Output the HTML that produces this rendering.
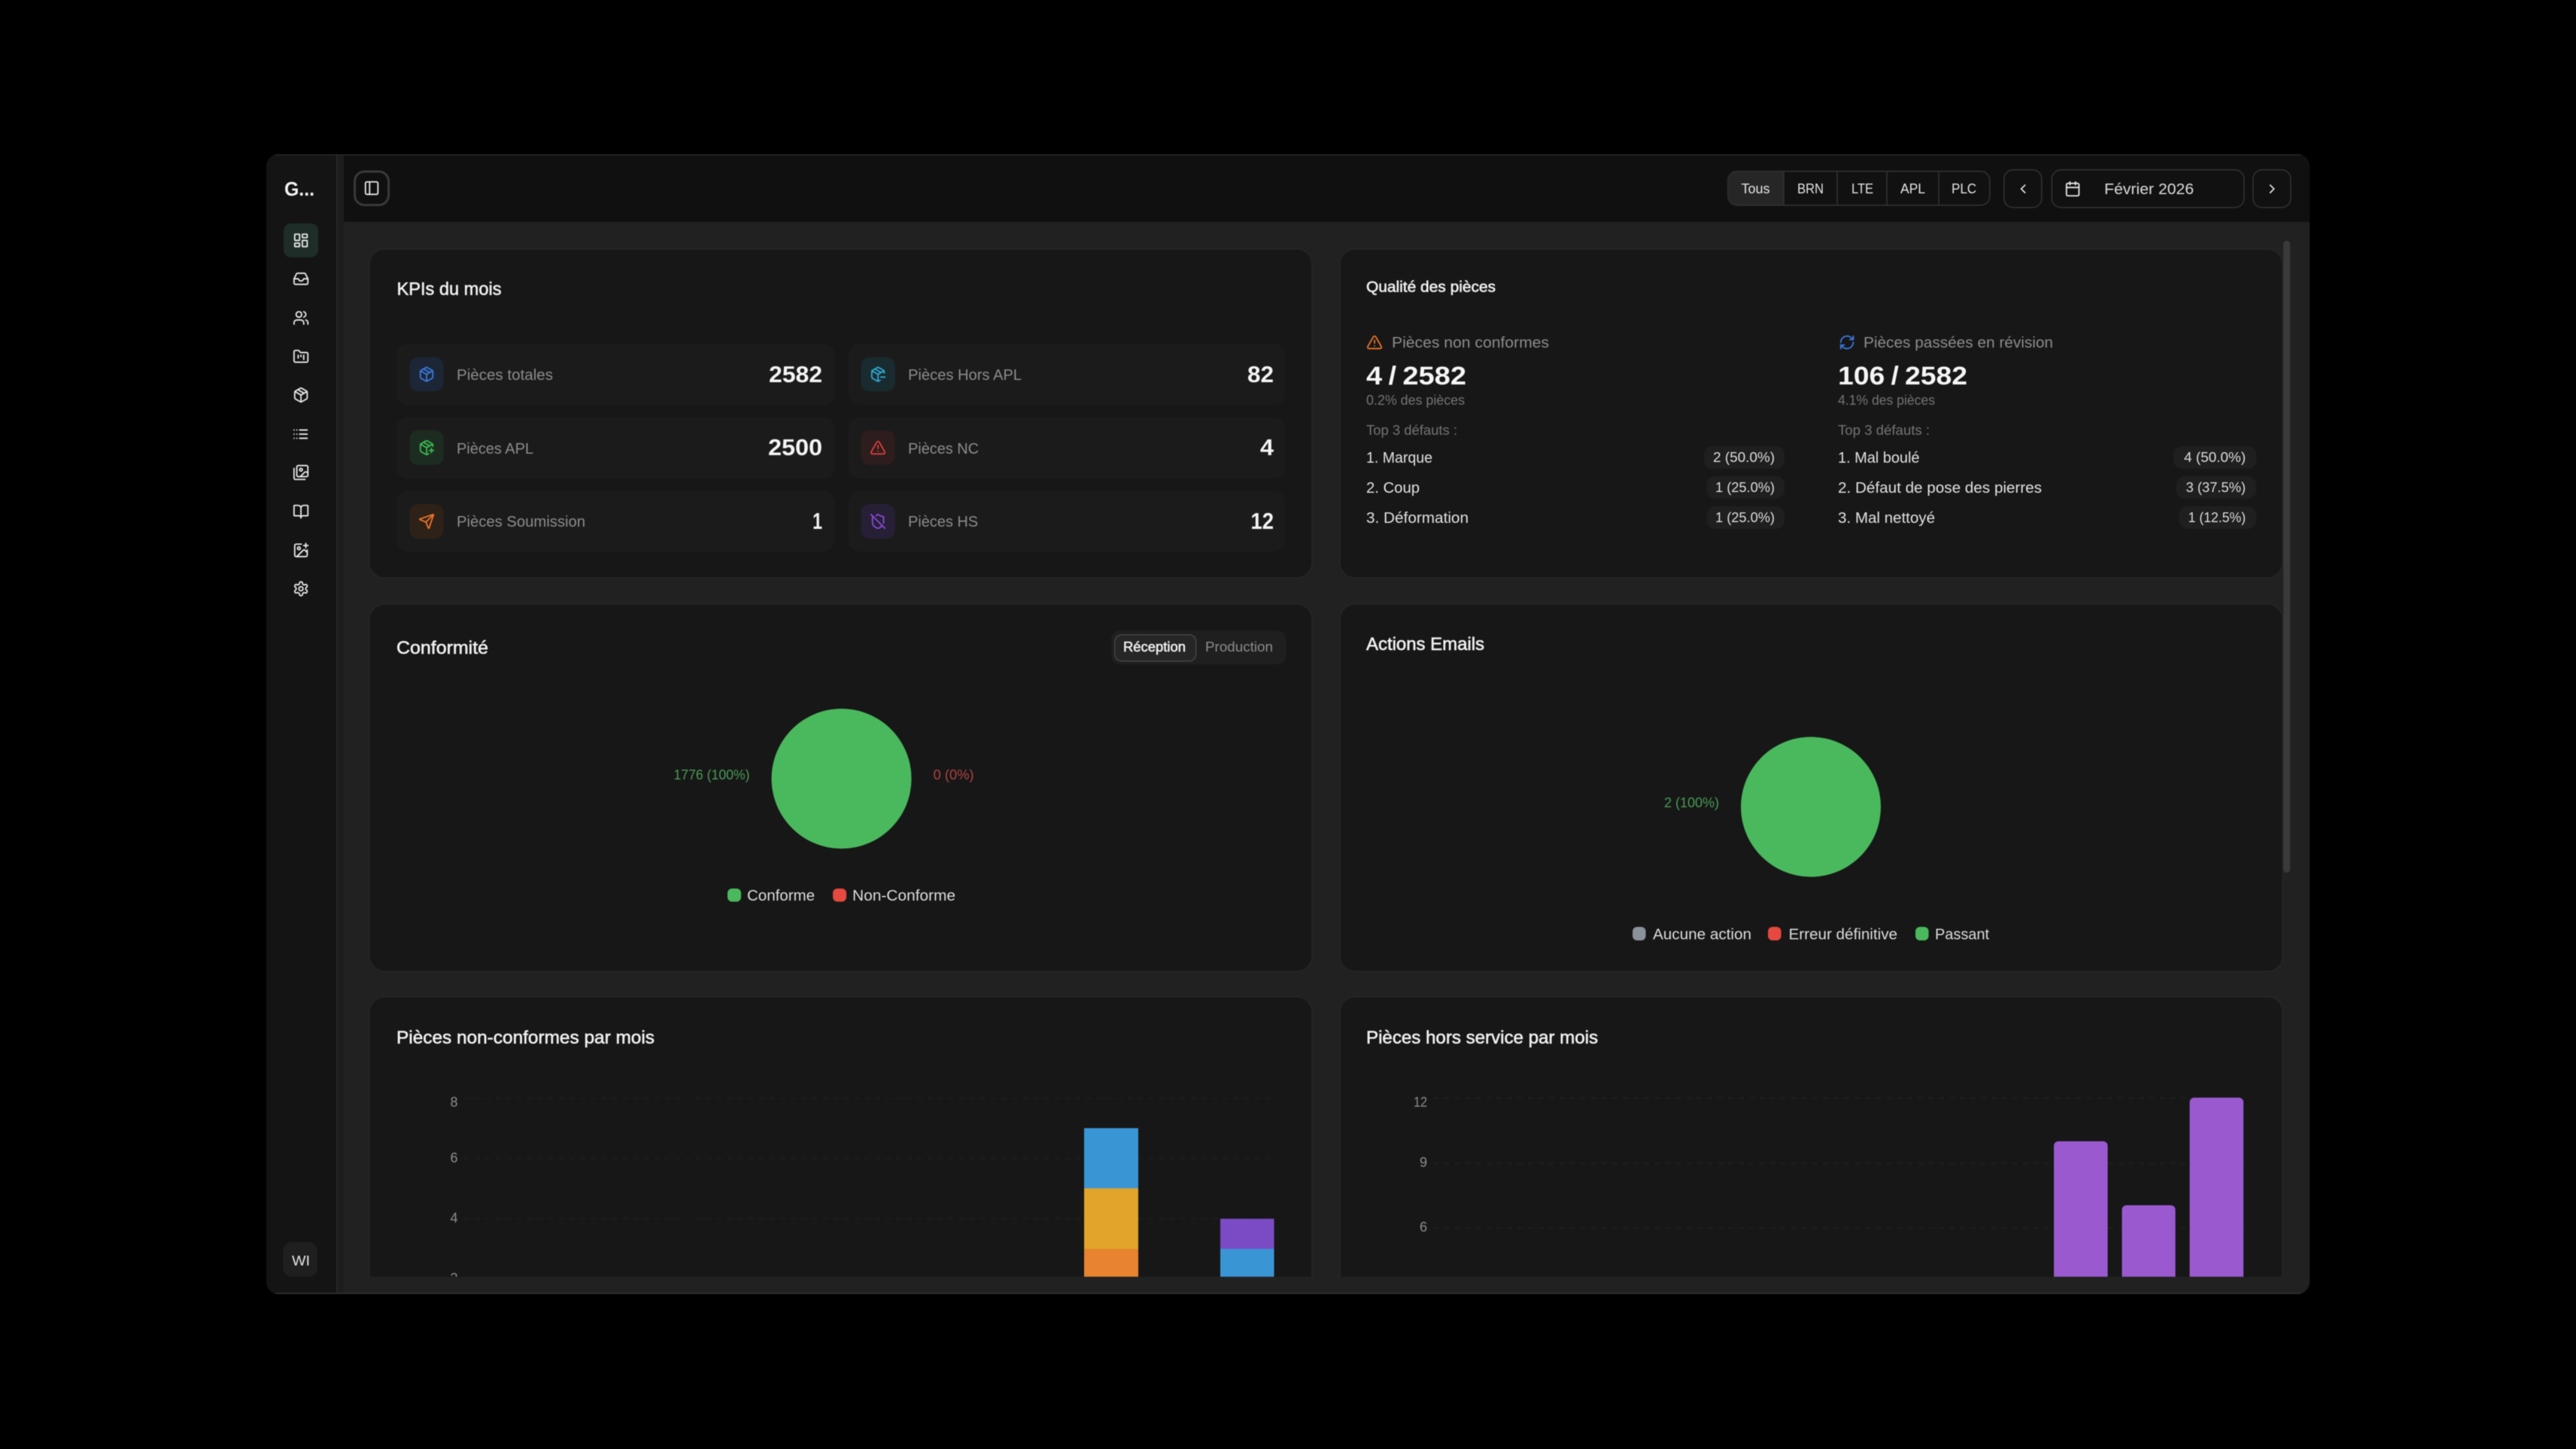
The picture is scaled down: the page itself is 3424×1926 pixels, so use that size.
<!DOCTYPE html>
<html lang="fr"><head><meta charset="utf-8"><title>Dashboard</title>
<style>
html,body{margin:0;padding:0;background:#000;width:3424px;height:1926px;overflow:hidden}
svg{display:block;filter:blur(.6px)}
text{font-family:"Liberation Sans",sans-serif}
.b{font-weight:700}
.t{fill:#f2f2f2;stroke:#f2f2f2;stroke-width:.55px}
.l{fill:#8c8c8c;font-size:20px}
.v{fill:#f4f4f4;font-weight:700;font-size:31px}
.d{fill:#747474;font-size:18px}
.i{fill:#e2e2e2;font-size:20px}
.p{fill:#dedede;font-size:18px}
.g{fill:#dcdcdc;font-size:20px}
.k{fill:#8e8e8e;font-size:18px}
.h{fill:#e6e6e6;font-size:18px}
.ic{fill:none;stroke-width:2;stroke-linecap:round;stroke-linejoin:round}
.s{stroke:#e8e8e8}
.c{fill:#171717;stroke:#262626;stroke-width:1.5}
.r{fill:#1b1b1b}
.y{fill:#1f1f1f}
.gl{stroke:#202020;stroke-width:1.5;stroke-dasharray:7 7}
.w{word-spacing:-2px}
</style></head><body>
<svg xmlns="http://www.w3.org/2000/svg" width="3424" height="1926" viewBox="0 0 3424 1926">
<defs>
<clipPath id="win"><rect x="354" y="205" width="2716" height="1515" rx="16"/></clipPath>
<clipPath id="main"><rect x="457" y="295" width="2613" height="1402"/></clipPath>
</defs>
<rect width="3424" height="1926" fill="#000"/>
<g clip-path="url(#win)">
<rect x="354" y="205" width="2716" height="1515" fill="#212121"/>
<rect x="354" y="205" width="94" height="1515" fill="#141414"/>
<rect x="448" y="205" width="9" height="1515" fill="#1d1d1d"/>
<rect x="447" y="205" width="1.5" height="1515" fill="#2a2a2a"/>
<rect x="457" y="205" width="2613" height="90" fill="#101010"/>
<rect x="354" y="205" width="2716" height="1.5" fill="#2a2a2a"/>
<rect x="354" y="1718.5" width="2716" height="1.5" fill="#333"/>

<!-- Sidebar -->
<text x="378" y="260" font-size="26" class="b" fill="#f4f4f4" textLength="40" lengthAdjust="spacingAndGlyphs">G...</text>
<rect x="377" y="297" width="46" height="45" rx="10" fill="#1f2d28"/>
<g class="ic s" transform="translate(389 308.5) scale(.92)"><rect x="3" y="3" width="7" height="9" rx="1"/><rect x="14" y="3" width="7" height="5" rx="1"/><rect x="14" y="12" width="7" height="9" rx="1"/><rect x="3" y="16" width="7" height="5" rx="1"/></g>
<g class="ic s" transform="translate(389 359.5) scale(.92)"><path d="M22 12h-6l-2 3h-4l-2-3H2"/><path d="M5.45 5.11 2 12v6a2 2 0 0 0 2 2h16a2 2 0 0 0 2-2v-6l-3.45-6.89A2 2 0 0 0 16.76 4H7.24a2 2 0 0 0-1.79 1.11z"/></g>
<g class="ic s" transform="translate(389 411.5) scale(.92)"><path d="M16 21v-2a4 4 0 0 0-4-4H6a4 4 0 0 0-4 4v2"/><circle cx="9" cy="7" r="4"/><path d="M22 21v-2a4 4 0 0 0-3-3.87"/><path d="M16 3.13a4 4 0 0 1 0 7.75"/></g>
<g class="ic s" transform="translate(389 463) scale(.92)"><path d="M4 20h16a2 2 0 0 0 2-2V8a2 2 0 0 0-2-2h-7.93a2 2 0 0 1-1.66-.9l-.82-1.2A2 2 0 0 0 7.93 3H4a2 2 0 0 0-2 2v13c0 1.1.9 2 2 2Z"/><path d="M8 10v4"/><path d="M12 10v2"/><path d="M16 10v6"/></g>
<g class="ic s" transform="translate(389 514) scale(.92)"><path d="M21 8a2 2 0 0 0-1-1.73l-7-4a2 2 0 0 0-2 0l-7 4A2 2 0 0 0 3 8v8a2 2 0 0 0 1 1.73l7 4a2 2 0 0 0 2 0l7-4A2 2 0 0 0 21 16Z"/><path d="m7.5 4.27 9 5.15"/><path d="M3.3 7 12 12l8.7-5"/><path d="M12 22V12"/></g>
<g class="ic s" transform="translate(389 566) scale(.92)"><path d="M10 6h11M10 12h11M10 18h11M2 6h.01M2 12h.01M2 18h.01M6 6h.01M6 12h.01M6 18h.01"/></g>
<g class="ic s" transform="translate(389 617) scale(.92)"><path d="M18 22H4a2 2 0 0 1-2-2V6"/><path d="m22 13-1.296-1.296a2.41 2.41 0 0 0-3.408 0L11 18"/><circle cx="12" cy="8" r="2"/><rect x="6" y="2" width="16" height="16" rx="2"/></g>
<g class="ic s" transform="translate(389 669) scale(.92)"><path d="M12 7v14"/><path d="M3 18a1 1 0 0 1-1-1V4a1 1 0 0 1 1-1h5a4 4 0 0 1 4 4 4 4 0 0 1 4-4h5a1 1 0 0 1 1 1v13a1 1 0 0 1-1 1h-6a3 3 0 0 0-3 3 3 3 0 0 0-3-3z"/></g>
<g class="ic s" transform="translate(389 720.5) scale(.92)"><path d="M16 5h6"/><path d="M19 2v6"/><path d="M21 11.5V19a2 2 0 0 1-2 2H5a2 2 0 0 1-2-2V5a2 2 0 0 1 2-2h7.5"/><path d="m21 15-3.086-3.086a2 2 0 0 0-2.828 0L6 21"/><circle cx="9" cy="9" r="2"/></g>
<g class="ic s" transform="translate(389 771.5) scale(.92)"><path d="M12.22 2h-.44a2 2 0 0 0-2 2v.18a2 2 0 0 1-1 1.73l-.43.25a2 2 0 0 1-2 0l-.15-.08a2 2 0 0 0-2.73.73l-.22.38a2 2 0 0 0 .73 2.73l.15.1a2 2 0 0 1 1 1.72v.51a2 2 0 0 1-1 1.74l-.15.09a2 2 0 0 0-.73 2.73l.22.38a2 2 0 0 0 2.73.73l.15-.08a2 2 0 0 1 2 0l.43.25a2 2 0 0 1 1 1.73V20a2 2 0 0 0 2 2h.44a2 2 0 0 0 2-2v-.18a2 2 0 0 1 1-1.73l.43-.25a2 2 0 0 1 2 0l.15.08a2 2 0 0 0 2.73-.73l.22-.39a2 2 0 0 0-.73-2.73l-.15-.08a2 2 0 0 1-1-1.74v-.5a2 2 0 0 1 1-1.74l.15-.09a2 2 0 0 0 .73-2.73l-.22-.38a2 2 0 0 0-2.73-.73l-.15.08a2 2 0 0 1-2 0l-.43-.25a2 2 0 0 1-1-1.73V4a2 2 0 0 0-2-2z"/><circle cx="12" cy="12" r="3"/></g>
<rect x="376" y="1651" width="46" height="46" rx="12" fill="#1f1f1f"/>
<text x="388" y="1682" class="h" textLength="24" lengthAdjust="spacingAndGlyphs">WI</text>

<!-- Top bar -->
<rect x="471.5" y="228" width="45" height="44.5" rx="13" fill="#101010" stroke="#3a3a3a" stroke-width="3"/>
<g class="ic s" transform="translate(483 239) scale(.92)"><rect x="3" y="3" width="18" height="18" rx="2"/><path d="M9 3v18"/></g>

<rect x="2296.75" y="227.75" width="348" height="45" rx="12" fill="#111" stroke="#333" stroke-width="1.5"/>
<path d="M2308 228.5h63v43.5h-63a11 11 0 0 1-11-11v-21.5a11 11 0 0 1 11-11z" fill="#262626"/>
<path d="M2371 228v44M2442 228v44M2508 228v44M2577 228v44" stroke="#333" stroke-width="1.5"/>
<text x="2314.5" y="257" class="h" textLength="38" lengthAdjust="spacingAndGlyphs">Tous</text>
<text x="2389" y="257" class="h" textLength="35" lengthAdjust="spacingAndGlyphs">BRN</text>
<text x="2461" y="257" class="h" textLength="29" lengthAdjust="spacingAndGlyphs">LTE</text>
<text x="2526" y="257" class="h" textLength="33" lengthAdjust="spacingAndGlyphs">APL</text>
<text x="2594" y="257" class="h" textLength="33" lengthAdjust="spacingAndGlyphs">PLC</text>
<rect x="2663.75" y="225.75" width="50" height="50" rx="12" fill="#111" stroke="#333" stroke-width="1.5"/>
<rect x="2727.25" y="225.75" width="255.5" height="50" rx="12" fill="#111" stroke="#333" stroke-width="1.5"/>
<rect x="2994.75" y="225.75" width="50" height="50" rx="12" fill="#111" stroke="#333" stroke-width="1.5"/>
<g class="ic s" transform="translate(2679 241) scale(.84)"><path d="m15 18-6-6 6-6"/></g>
<g class="ic s" transform="translate(3010 241) scale(.84)"><path d="m9 18 6-6-6-6"/></g>
<g class="ic s" transform="translate(2744 240) scale(.92)"><path d="M8 2v4"/><path d="M16 2v4"/><rect x="3" y="4" width="18" height="18" rx="2"/><path d="M3 10h18"/></g>
<text x="2797" y="258" class="g" textLength="119" lengthAdjust="spacingAndGlyphs">Février 2026</text>

<!-- Scrollbar -->
<rect x="3035" y="320" width="9" height="840" rx="4.5" fill="#3a3a3a"/>

<!-- KPI card -->
<rect class="c" x="491" y="331" width="1253" height="437" rx="20"/>
<text x="527.5" y="392" class="t" font-size="24" textLength="139" lengthAdjust="spacingAndGlyphs">KPIs du mois</text>
<rect class="r" x="527" y="457" width="582" height="81" rx="14"/>
<rect class="r" x="527" y="555" width="582" height="81" rx="14"/>
<rect class="r" x="527" y="653" width="582" height="80" rx="14"/>
<rect class="r" x="1128" y="457" width="580" height="81" rx="14"/>
<rect class="r" x="1128" y="555" width="580" height="81" rx="14"/>
<rect class="r" x="1128" y="653" width="580" height="80" rx="14"/>

<rect x="544.5" y="475" width="45" height="45" rx="11" fill="#1c2636"/>
<rect x="544.5" y="572" width="45" height="46" rx="11" fill="#1c2c20"/>
<rect x="544.5" y="670" width="45" height="46" rx="11" fill="#2e2118"/>
<rect x="1144.5" y="475" width="45" height="45" rx="11" fill="#1a2b30"/>
<rect x="1144.5" y="572" width="45" height="46" rx="11" fill="#2d1d1d"/>
<rect x="1144.5" y="670" width="45" height="46" rx="11" fill="#261f35"/>

<g class="ic" stroke="#3b78e0" transform="translate(556 486.5) scale(.92)"><path d="M21 8a2 2 0 0 0-1-1.73l-7-4a2 2 0 0 0-2 0l-7 4A2 2 0 0 0 3 8v8a2 2 0 0 0 1 1.73l7 4a2 2 0 0 0 2 0l7-4A2 2 0 0 0 21 16Z"/><path d="m7.5 4.27 9 5.15"/><path d="M3.3 7 12 12l8.7-5"/><path d="M12 22V12"/></g>
<g class="ic" stroke="#3db854" transform="translate(556 584) scale(.92)"><path d="M16 16h6"/><path d="M19 13v6"/><path d="M21 10V8a2 2 0 0 0-1-1.73l-7-4a2 2 0 0 0-2 0l-7 4A2 2 0 0 0 3 8v8a2 2 0 0 0 1 1.73l7 4a2 2 0 0 0 2 0l2-1.14"/><path d="m7.5 4.27 9 5.15"/><path d="M3.29 7 12 12l8.71-5"/><path d="M12 22V12"/></g>
<g class="ic" stroke="#e8742a" transform="translate(556 682) scale(.92)"><path d="M14.536 21.686a.5.5 0 0 0 .937-.024l6.5-19a.496.496 0 0 0-.635-.635l-19 6.5a.5.5 0 0 0-.024.937l7.93 3.18a2 2 0 0 1 1.112 1.11z"/><path d="m21.854 2.147-10.94 10.939"/></g>
<g class="ic" stroke="#2ea8cf" transform="translate(1156 486.5) scale(.92)"><path d="M16 16h6"/><path d="M21 10V8a2 2 0 0 0-1-1.73l-7-4a2 2 0 0 0-2 0l-7 4A2 2 0 0 0 3 8v8a2 2 0 0 0 1 1.73l7 4a2 2 0 0 0 2 0l2-1.14"/><path d="m7.5 4.27 9 5.15"/><path d="M3.29 7 12 12l8.71-5"/><path d="M12 22V12"/></g>
<g class="ic" stroke="#d9403c" transform="translate(1156 584) scale(.92)"><path d="m21.73 18-8-14a2 2 0 0 0-3.48 0l-8 14A2 2 0 0 0 4 21h16a2 2 0 0 0 1.73-3"/><path d="M12 9v4"/><path d="M12 17h.01"/></g>
<g class="ic" stroke="#8a4ad8" transform="translate(1156 682) scale(.92)"><path d="m2 2 20 20"/><path d="M5 5a1 1 0 0 0-1 1v7c0 5 3.5 7.5 7.67 8.94a1 1 0 0 0 .67.01c2.35-.82 4.48-2.2 5.86-4.26"/><path d="M9.309 3.652A12.252 12.252 0 0 0 11.24 2.28a1.17 1.17 0 0 1 1.52 0C14.51 3.81 17 5 19 5a1 1 0 0 1 1 1v7a9.784 9.784 0 0 1-.08 1.264"/></g>

<text x="607" y="505" class="l" textLength="128" lengthAdjust="spacingAndGlyphs">Pièces totales</text>
<text x="607" y="603" class="l" textLength="102" lengthAdjust="spacingAndGlyphs">Pièces APL</text>
<text x="607" y="700" class="l" textLength="171" lengthAdjust="spacingAndGlyphs">Pièces Soumission</text>
<text x="1207" y="505" class="l" textLength="151" lengthAdjust="spacingAndGlyphs">Pièces Hors APL</text>
<text x="1207" y="603" class="l" textLength="94" lengthAdjust="spacingAndGlyphs">Pièces NC</text>
<text x="1207" y="700" class="l" textLength="93" lengthAdjust="spacingAndGlyphs">Pièces HS</text>
<text x="1022" y="508" class="v" textLength="71" lengthAdjust="spacingAndGlyphs">2582</text>
<text x="1021" y="605" class="v" textLength="72" lengthAdjust="spacingAndGlyphs">2500</text>
<text x="1080" y="703" class="v" textLength="13" lengthAdjust="spacingAndGlyphs">1</text>
<text x="1658" y="508" class="v" textLength="35" lengthAdjust="spacingAndGlyphs">82</text>
<text x="1675" y="605" class="v" textLength="18" lengthAdjust="spacingAndGlyphs">4</text>
<text x="1662.5" y="703" class="v" textLength="30.5" lengthAdjust="spacingAndGlyphs">12</text>

<!-- Qualite card -->
<rect class="c" x="1781" y="331" width="1253" height="437" rx="20"/>
<text x="1816" y="388" class="t" font-size="20" textLength="172" lengthAdjust="spacingAndGlyphs">Qualité des pièces</text>
<g class="ic" stroke="#e8742a" transform="translate(1816 444) scale(.92)"><path d="m21.73 18-8-14a2 2 0 0 0-3.48 0l-8 14A2 2 0 0 0 4 21h16a2 2 0 0 0 1.73-3"/><path d="M12 9v4"/><path d="M12 17h.01"/></g>
<text x="1850" y="462" class="l" textLength="209" lengthAdjust="spacingAndGlyphs">Pièces non conformes</text>
<text x="1816" y="511" class="b w" fill="#f6f6f6" font-size="34" textLength="133" lengthAdjust="spacingAndGlyphs">4 / 2582</text>
<text x="1816" y="538" class="d" textLength="131" lengthAdjust="spacingAndGlyphs">0.2% des pièces</text>
<text x="1816" y="578" class="d" textLength="121" lengthAdjust="spacingAndGlyphs">Top 3 défauts :</text>
<text x="1816" y="615" class="i" textLength="88" lengthAdjust="spacingAndGlyphs">1. Marque</text>
<text x="1816" y="655" class="i" textLength="71" lengthAdjust="spacingAndGlyphs">2. Coup</text>
<text x="1816" y="695" class="i" textLength="136" lengthAdjust="spacingAndGlyphs">3. Déformation</text>
<rect class="y" x="2265" y="593" width="107" height="30" rx="11"/>
<rect class="y" x="2268.5" y="633" width="103.5" height="30" rx="11"/>
<rect class="y" x="2268.5" y="673" width="103.5" height="30" rx="11"/>
<text x="2277" y="614" class="p" textLength="82" lengthAdjust="spacingAndGlyphs">2 (50.0%)</text>
<text x="2280" y="654" class="p" textLength="79" lengthAdjust="spacingAndGlyphs">1 (25.0%)</text>
<text x="2280" y="694" class="p" textLength="79" lengthAdjust="spacingAndGlyphs">1 (25.0%)</text>

<g class="ic" stroke="#3b78e0" transform="translate(2444 444) scale(.92)"><path d="M3 12a9 9 0 0 1 9-9 9.75 9.75 0 0 1 6.74 2.74L21 8"/><path d="M21 3v5h-5"/><path d="M21 12a9 9 0 0 1-9 9 9.75 9.75 0 0 1-6.74-2.74L3 16"/><path d="M8 16H3v5"/></g>
<text x="2477" y="462" class="l" textLength="252" lengthAdjust="spacingAndGlyphs">Pièces passées en révision</text>
<text x="2443" y="511" class="b w" fill="#f6f6f6" font-size="34" textLength="172" lengthAdjust="spacingAndGlyphs">106 / 2582</text>
<text x="2443" y="538" class="d" textLength="129" lengthAdjust="spacingAndGlyphs">4.1% des pièces</text>
<text x="2443" y="578" class="d" textLength="122" lengthAdjust="spacingAndGlyphs">Top 3 défauts :</text>
<text x="2443" y="615" class="i" textLength="108.5" lengthAdjust="spacingAndGlyphs">1. Mal boulé</text>
<text x="2443" y="655" class="i" textLength="271" lengthAdjust="spacingAndGlyphs">2. Défaut de pose des pierres</text>
<text x="2443" y="695" class="i" textLength="129" lengthAdjust="spacingAndGlyphs">3. Mal nettoyé</text>
<rect class="y" x="2889" y="593" width="110" height="30" rx="11"/>
<rect class="y" x="2892.5" y="633" width="106.5" height="30" rx="11"/>
<rect class="y" x="2896.5" y="673" width="102.5" height="30" rx="11"/>
<text x="2903" y="614" class="p" textLength="82" lengthAdjust="spacingAndGlyphs">4 (50.0%)</text>
<text x="2905.5" y="654" class="p" textLength="79.5" lengthAdjust="spacingAndGlyphs">3 (37.5%)</text>
<text x="2908.5" y="694" class="p" textLength="76.5" lengthAdjust="spacingAndGlyphs">1 (12.5%)</text>

<!-- Conformite card -->
<rect class="c" x="491" y="803" width="1253" height="488" rx="20"/>
<text x="527" y="869" class="t" font-size="24" textLength="122" lengthAdjust="spacingAndGlyphs">Conformité</text>
<rect x="1477" y="838" width="232.5" height="45" rx="12" fill="#1f1f1f"/>
<rect x="1481.75" y="843.75" width="108" height="35" rx="9" fill="#262626" stroke="#444" stroke-width="1.5"/>
<text x="1493" y="866" class="t" font-size="18" textLength="83" lengthAdjust="spacingAndGlyphs">Réception</text>
<text x="1602" y="866" fill="#8c8c8c" font-size="18" textLength="90" lengthAdjust="spacingAndGlyphs">Production</text>
<circle cx="1118.5" cy="1035" r="93" fill="#4ab95d"/>
<text x="895.5" y="1036" fill="#4a9b57" font-size="18" textLength="101" lengthAdjust="spacingAndGlyphs">1776 (100%)</text>
<text x="1240.5" y="1036" fill="#b04442" font-size="18" textLength="54" lengthAdjust="spacingAndGlyphs">0 (0%)</text>
<rect x="967" y="1181" width="18" height="17.5" rx="6" fill="#4ab95d"/>
<text x="993" y="1197" class="g" textLength="90" lengthAdjust="spacingAndGlyphs">Conforme</text>
<rect x="1107" y="1181" width="18" height="17.5" rx="6" fill="#e5493f"/>
<text x="1133" y="1197" class="g" textLength="137" lengthAdjust="spacingAndGlyphs">Non-Conforme</text>

<!-- Actions emails -->
<rect class="c" x="1781" y="803" width="1253" height="488" rx="20"/>
<text x="1816" y="864" class="t" font-size="24" textLength="157" lengthAdjust="spacingAndGlyphs">Actions Emails</text>
<circle cx="2407" cy="1072.5" r="93" fill="#4ab95d"/>
<text x="2212" y="1073" fill="#4a9b57" font-size="18" textLength="73" lengthAdjust="spacingAndGlyphs">2 (100%)</text>
<rect x="2170" y="1232" width="17.5" height="18" rx="6" fill="#8b929b"/>
<text x="2197" y="1248.5" class="g" textLength="131" lengthAdjust="spacingAndGlyphs">Aucune action</text>
<rect x="2350" y="1232" width="17.5" height="18" rx="6" fill="#e5493f"/>
<text x="2377.5" y="1248.5" class="g" textLength="144.5" lengthAdjust="spacingAndGlyphs">Erreur définitive</text>
<rect x="2546" y="1232" width="17.5" height="18" rx="6" fill="#4ab95d"/>
<text x="2572" y="1248.5" class="g" textLength="72" lengthAdjust="spacingAndGlyphs">Passant</text>

<!-- Bottom charts, clipped at content edge -->
<g clip-path="url(#main)">
<rect class="c" x="491" y="1325" width="1253" height="500" rx="20"/>
<text x="527" y="1387" class="t" font-size="24" textLength="343" lengthAdjust="spacingAndGlyphs">Pièces non-conformes par mois</text>
<path class="gl" d="M617 1460H1695M617 1540H1695M617 1620H1695"/>
<text x="598.5" y="1471" class="k" textLength="10" lengthAdjust="spacingAndGlyphs">8</text>
<text x="598.5" y="1545" class="k" textLength="10" lengthAdjust="spacingAndGlyphs">6</text>
<text x="598.5" y="1625" class="k" textLength="10" lengthAdjust="spacingAndGlyphs">4</text>
<text x="598.5" y="1705" class="k" textLength="10" lengthAdjust="spacingAndGlyphs">2</text>
<rect x="1441" y="1499.5" width="72" height="80" fill="#3a95d5"/>
<rect x="1441" y="1579.5" width="72" height="80.5" fill="#e0a52a"/>
<rect x="1441" y="1660" width="72" height="40" fill="#e8842f"/>
<rect x="1622" y="1620" width="71.5" height="40" fill="#7a4bc4"/>
<rect x="1622" y="1660" width="71.5" height="40" fill="#3a95d5"/>

<rect class="c" x="1781" y="1325" width="1253" height="500" rx="20"/>
<text x="1816" y="1387" class="t" font-size="24" textLength="308" lengthAdjust="spacingAndGlyphs">Pièces hors service par mois</text>
<path class="gl" d="M1905 1459.5H2985M1905 1546H2985M1905 1632H2985"/>
<text x="1879" y="1471" class="k" textLength="18" lengthAdjust="spacingAndGlyphs">12</text>
<text x="1887" y="1551" class="k" textLength="10" lengthAdjust="spacingAndGlyphs">9</text>
<text x="1887" y="1637" class="k" textLength="10" lengthAdjust="spacingAndGlyphs">6</text>
<path fill="#9b59d0" d="M2730 1700v-177a6 6 0 0 1 6-6h59.5a6 6 0 0 1 6 6v177z"/>
<path fill="#9b59d0" d="M2820.5 1700v-92a6 6 0 0 1 6-6h59a6 6 0 0 1 6 6v92z"/>
<path fill="#9b59d0" d="M2910.5 1700v-235a6 6 0 0 1 6-6h59.5a6 6 0 0 1 6 6v235z"/>
</g>
</g>
</svg>
</body></html>
